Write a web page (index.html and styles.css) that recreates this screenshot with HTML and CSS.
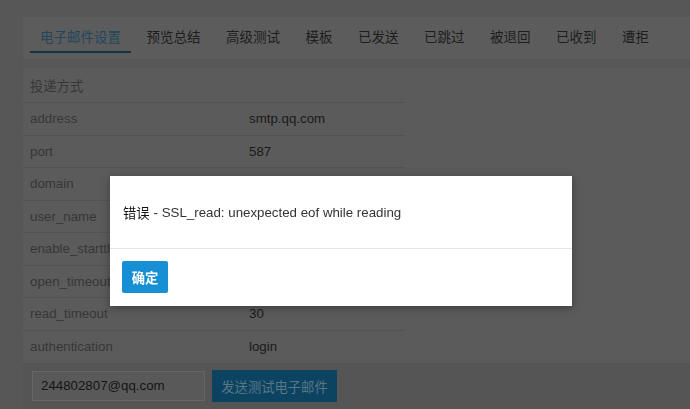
FILE: index.html
```html
<!DOCTYPE html>
<html lang="zh-CN">
<head>
<meta charset="utf-8">
<title>电子邮件设置</title>
<link rel="stylesheet" href="styles.css">
</head>
<body>
<div class="page">
  <nav class="tabs">
    <a class="tab active">电子邮件设置</a>
    <a class="tab">预览总结</a>
    <a class="tab">高级测试</a>
    <a class="tab">模板</a>
    <a class="tab">已发送</a>
    <a class="tab">已跳过</a>
    <a class="tab">被退回</a>
    <a class="tab">已收到</a>
    <a class="tab">遭拒</a>
  </nav>
  <section class="panel">
    <div class="table">
      <div class="row head"><span class="label">投递方式</span><span class="value"></span></div>
      <div class="row"><span class="label">address</span><span class="value">smtp.qq.com</span></div>
      <div class="row"><span class="label">port</span><span class="value">587</span></div>
      <div class="row"><span class="label">domain</span><span class="value"></span></div>
      <div class="row"><span class="label">user_name</span><span class="value"></span></div>
      <div class="row"><span class="label">enable_starttls_auto</span><span class="value"></span></div>
      <div class="row"><span class="label">open_timeout</span><span class="value"></span></div>
      <div class="row"><span class="label">read_timeout</span><span class="value">30</span></div>
      <div class="row"><span class="label">authentication</span><span class="value">login</span></div>
    </div>
    <div class="sendbar">
      <div class="input">244802807@qq.com</div>
      <button class="send">发送测试电子邮件</button>
    </div>
  </section>
</div>
<div class="mask">
  <div class="dialog">
    <div class="dialog-body"><strong class="err">错误</strong> - SSL_read: unexpected eof while reading</div>
    <div class="dialog-foot"><button class="ok">确定</button></div>
  </div>
</div>
</body>
</html>
```
FILE: styles.css
```css
html, body {
  margin: 0;
  padding: 0;
  height: 100%;
  overflow: hidden;
}
body {
  background: #575757;
  font-family: "Liberation Sans", "Noto Sans CJK SC", sans-serif;
  font-size: 13.3px;
}
.page {
  padding: 17px 0 0 23px;
}
.tabs {
  display: flex;
  align-items: flex-start;
  height: 36px;
  padding: 0 0 6px 7px;
  background: #5c5c5c;
}
.tab {
  display: block;
  padding: 12px 10px 4px;
  margin-right: 5.5px;
  font-size: 13.5px;
  line-height: 18px;
  color: #1e1e1e;
  border-bottom: 2px solid transparent;
}
.active {
  color: #22465c;
  border-bottom-color: #173447;
}
.panel {
  margin-top: 9px;
  background: #5b5b5b;
}
.table {
  width: 382px;
}
.row {
  display: flex;
  align-items: center;
  height: 32.5px;
  box-sizing: border-box;
  border-bottom: 1px solid #535353;
  padding-left: 7px;
}
.row:last-child {
  border-bottom: none;
}
.row.head {
  height: 35px;
}
.label {
  width: 219px;
  color: #373737;
  white-space: nowrap;
  overflow: hidden;
}
.value {
  color: #1a1a1a;
}
.sendbar {
  display: flex;
  align-items: center;
  gap: 7px;
  height: 46px;
  padding: 0 9px;
  background: #555555;
}
.input {
  box-sizing: border-box;
  width: 173px;
  height: 30px;
  padding: 0 8px;
  line-height: 28px;
  background: #595959;
  border: 1px solid #666666;
  color: #151515;
}
.send {
  height: 32px;
  width: 125px;
  padding: 0;
  border: none;
  background: #0b4360;
  color: #5a7686;
  font: inherit;
}
.mask {
  position: fixed;
  inset: 0;
}
.dialog {
  width: 462px;
  margin: 176px 0 0 110px;
  background: #ffffff;
  box-shadow: 0 2px 8px rgba(0, 0, 0, 0.35);
}
.dialog-body {
  height: 72px;
  display: flex;
  align-items: center;
  padding: 0 13px;
  color: #333333;
  border-bottom: 1px solid #e5e5e5;
}
.err {
  font-weight: normal;
  color: #111111;
  margin-right: 4px;
}
.dialog-foot {
  padding: 12px 12px 13px;
}
.ok {
  display: block;
  height: 32px;
  width: 46px;
  padding: 0;
  border: none;
  border-radius: 2px;
  background: #168fd4;
  color: #ffffff;
  font: inherit;
  font-weight: bold;
}
```
